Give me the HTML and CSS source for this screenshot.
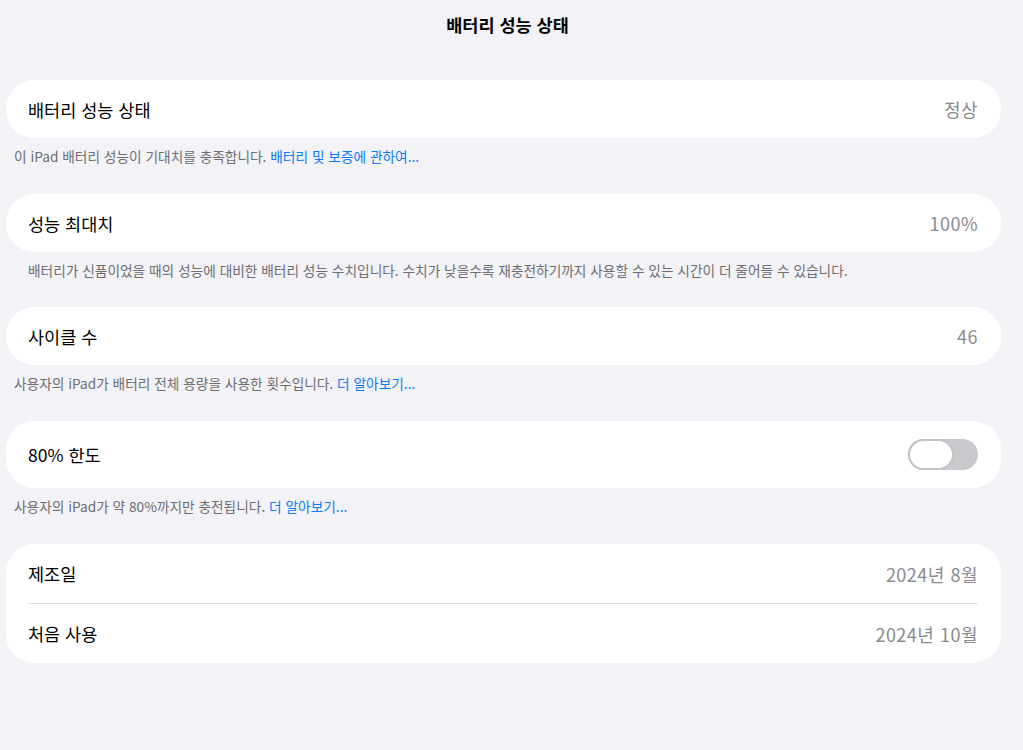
FILE: index.html
```html
<!DOCTYPE html>
<html lang="ko">
<head>
<meta charset="utf-8">
<link rel="stylesheet" href="styles.css">
</head>
<body>
<div class="page">
  <header class="nav">배터리 성능 상태</header>
  <main class="list">
    <section class="card">
      <div class="row"><span class="label">배터리 성능 상태</span><span class="value">정상</span></div>
    </section>
    <p class="note">이 iPad 배터리 성능이 기대치를 충족합니다. <span class="link">배터리 및 보증에 관하여...</span></p>

    <section class="card">
      <div class="row"><span class="label">성능 최대치</span><span class="value">100%</span></div>
    </section>
    <p class="note indent">배터리가 신품이었을 때의 성능에 대비한 배터리 성능 수치입니다. 수치가 낮을수록 재충전하기까지 사용할 수 있는 시간이 더 줄어들 수 있습니다.</p>

    <section class="card">
      <div class="row"><span class="label">사이클 수</span><span class="value">46</span></div>
    </section>
    <p class="note">사용자의 iPad가 배터리 전체 용량을 사용한 횟수입니다. <span class="link">더 알아보기...</span></p>

    <section class="card">
      <div class="row tall"><span class="label">80% 한도</span><span class="toggle"><span class="thumb"></span></span></div>
    </section>
    <p class="note">사용자의 iPad가 약 80%까지만 충전됩니다. <span class="link">더 알아보기...</span></p>

    <section class="card">
      <div class="row r59"><span class="label">제조일</span><span class="value">2024년 8월</span></div>
      <div class="divider"></div>
      <div class="row r59"><span class="label">처음 사용</span><span class="value">2024년 10월</span></div>
    </section>
  </main>
</div>
</body>
</html>
```
FILE: styles.css
```css
html, body {
  margin: 0;
  padding: 0;
  background: #f2f2f7;
}
body {
  font-family: "Noto Sans CJK KR", "Noto Sans", sans-serif;
  color: #000;
  width: 1023px;
  height: 750px;
  overflow: hidden;
}
.page {
  display: flex;
  flex-direction: column;
}
.nav {
  height: 48px;
  display: flex;
  align-items: center;
  justify-content: center;
  padding-right: 8px;
  font-size: 17.5px;
  font-weight: 600;
}
.list {
  display: flex;
  flex-direction: column;
  padding: 32px 22px 0 6px;
}
.card {
  background: #fff;
  border-radius: 28px;
  display: flex;
  flex-direction: column;
}
.row {
  height: 58px;
  display: flex;
  align-items: center;
  justify-content: space-between;
  padding: 0 23px 0 22px;
}
.row.tall { height: 67px; }
.row.r59 { height: 59px; }
.label {
  font-size: 17.5px;
}
.value {
  font-size: 18px;
  color: #8a8a8e;
  letter-spacing: 0.5px;
}
.divider {
  height: 1px;
  background: #e0e0e4;
  margin: 0 23px 0 22px;
}
.note {
  margin: 0;
  padding: 9px 8px 0 8px;
  height: 47px;
  box-sizing: content-box;
  font-size: 13.7px;
  line-height: 18px;
  color: #6d6d72;
}
.note.indent { padding-left: 22px; height: 46px; }
.link { color: #0a7aff; }
.toggle {
  width: 70px;
  height: 31px;
  border-radius: 16px;
  background: #c9c9ce;
  position: relative;
  display: block;
}
.thumb {
  position: absolute;
  left: 0;
  top: 0;
  width: 42px;
  height: 27px;
  border: 2px solid #c4c4c8;
  border-radius: 16px;
  background: #fff;
}
```
